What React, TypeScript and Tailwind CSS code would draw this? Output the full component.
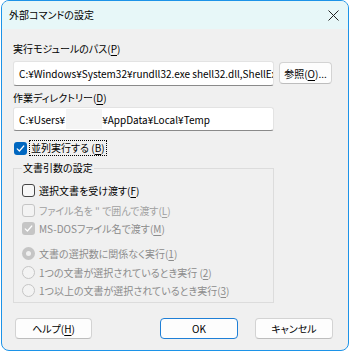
import React from "react";

const FONT = "font-['Noto_Sans_CJK_JP',sans-serif] [font-feature-settings:'palt']";

function Check({ checked, disabled }: { checked?: boolean; disabled?: boolean }) {
  if (checked) {
    return (
      <span
        className={`w-[13px] h-[13px] rounded-[3px] flex items-center justify-center shrink-0 ${
          disabled ? "bg-[#c5c5c5]" : "bg-[#0067c0]"
        }`}
      >
        <svg width="11" height="11" viewBox="0 0 11 11">
          <path d="M2.2 5.8 L4.4 8 L8.8 3" fill="none" stroke="#ffffff" strokeWidth="1.2" strokeLinecap="round" strokeLinejoin="round" />
        </svg>
      </span>
    );
  }
  return (
    <span
      className={`w-[13px] h-[13px] rounded-[3px] border shrink-0 ${
        disabled ? "border-[#c5c5c5] bg-[#f3f3f3]" : "border-[#454545] bg-[#f7f7f7]"
      }`}
    />
  );
}

function Radio({ selected }: { selected?: boolean }) {
  if (selected) {
    return (
      <span className="w-[13px] h-[13px] rounded-full bg-[#c5c5c5] flex items-center justify-center shrink-0">
        <span className="w-[5px] h-[5px] rounded-full bg-[#f0f0f0]" />
      </span>
    );
  }
  return <span className="w-[13px] h-[13px] rounded-full border border-[#c5c5c5] bg-[#f3f3f3] shrink-0" />;
}

function U({ children }: { children: React.ReactNode }) {
  return <span className="underline underline-offset-[2px]">{children}</span>;
}

function Btn({ children, primary, className }: { children: React.ReactNode; primary?: boolean; className?: string }) {
  return (
    <div
      className={`h-[21px] flex items-center justify-center rounded-[4px] bg-[#fdfdfd] text-black whitespace-nowrap ${
        primary ? "border border-[#1f7fd6]" : "border border-[#d3d3d3] border-b-[#bdbdbd]"
      } ${className ?? ""}`}
    >
      {children}
    </div>
  );
}

export default function App() {
  return (
    <div className={`w-[350px] h-[354px] bg-white pl-[1px] ${FONT} text-[10px] text-black`}>
      <div className="w-[348px] h-[351px] border border-[#1c93e8] rounded-[8px] overflow-hidden flex flex-col bg-[#f0f0f0]">
        {/* Title bar */}
        <div className="h-[28px] bg-[#e7f7f8] flex items-center pl-[7px] pr-[8px] shrink-0">
          <span className="leading-[16px] text-black">外部コマンドの設定</span>
          <svg className="ml-auto mr-[1px]" width="11" height="11" viewBox="0 0 11 11">
            <path d="M0.5 0.5 L10.5 10.5 M10.5 0.5 L0.5 10.5" stroke="#222" strokeWidth="1" />
          </svg>
        </div>

        {/* Body */}
        <div className="flex-1 px-[11px] pt-[12px]">
          <div className="h-[16px] leading-[16px] whitespace-nowrap">
            実行モジュールのパス(<U>P</U>)
          </div>
          <div className="mt-[4px] flex items-start">
            <div className="w-[261px] h-[25px] bg-white border border-[#e3e3e3] border-b-[#8a8a8a] rounded-[3px] flex items-center pl-[5px] overflow-hidden whitespace-nowrap">
              C:¥Windows¥System32¥rundll32.exe shell32.dll,ShellExec_RunDLL
            </div>
            <Btn className="w-[53px] ml-[5px] mt-[1px] h-[22px]">
              参照(<U>O</U>)...
            </Btn>
          </div>

          <div className="mt-[4px] h-[16px] leading-[16px] whitespace-nowrap">
            作業ディレクトリー(<U>D</U>)
          </div>
          <div className="mt-[1px] w-[261px] h-[24px] bg-white border border-[#e3e3e3] border-b-[#8a8a8a] rounded-[3px] flex items-center pl-[5px] overflow-hidden whitespace-nowrap">
            <span>C:¥Users¥</span>
            <span className="inline-block w-[36px] h-[20px] bg-[#f4f4f4] ml-[1px]" />
            <span>¥AppData¥Local¥Temp</span>
          </div>

          <div className="mt-[9px] h-[16px] flex items-center whitespace-nowrap">
            <span className="ml-[1px]">
              <Check checked />
            </span>
            <span className="ml-[2px] h-[16px] leading-[14px] px-[1px] border border-dotted border-black">
              並列実行する (<U>B</U>)
            </span>
          </div>

          <fieldset className="mt-[4px] w-[261px] border border-[#dcdcdc] px-[8px] pb-[3px] whitespace-nowrap">
            <legend className="px-[1px] h-[16px] leading-[16px]">文書引数の設定</legend>
            <div className="mt-[5px] h-[18px] flex items-center gap-[4px]">
              <Check />
              <span>
                選択文書を受け渡す(<U>F</U>)
              </span>
            </div>
            <div className="mt-[2px] h-[18px] flex items-center gap-[4px] text-[#a0a0a0]">
              <Check disabled />
              <span>
                ファイル名を " で囲んで渡す(<U>L</U>)
              </span>
            </div>
            <div className="h-[18px] flex items-center gap-[4px] text-[#8c8c8c]">
              <Check checked disabled />
              <span>
                MS-DOSファイル名で渡す(<U>M</U>)
              </span>
            </div>
            <div className="mt-[7px] h-[18px] flex items-center gap-[4px] text-[#8c8c8c]">
              <Radio selected />
              <span>
                文書の選択数に関係なく実行(<U>1</U>)
              </span>
            </div>
            <div className="mt-[1px] h-[18px] flex items-center gap-[4px] text-[#8c8c8c]">
              <Radio />
              <span>
                1つの文書が選択されているとき実行 (<U>2</U>)
              </span>
            </div>
            <div className="h-[18px] flex items-center gap-[4px] text-[#8c8c8c]">
              <Radio />
              <span>
                1つ以上の文書が選択されているとき実行(<U>3</U>)
              </span>
            </div>
          </fieldset>

          <div className="mt-[15px] flex items-center">
            <Btn className="w-[77px] ml-[2px]">
              ヘルプ(<U>H</U>)
            </Btn>
            <Btn primary className="w-[78px] ml-[68px]">
              OK
            </Btn>
            <Btn className="w-[78px] ml-[17px]">キャンセル</Btn>
          </div>
        </div>
      </div>
    </div>
  );
}
